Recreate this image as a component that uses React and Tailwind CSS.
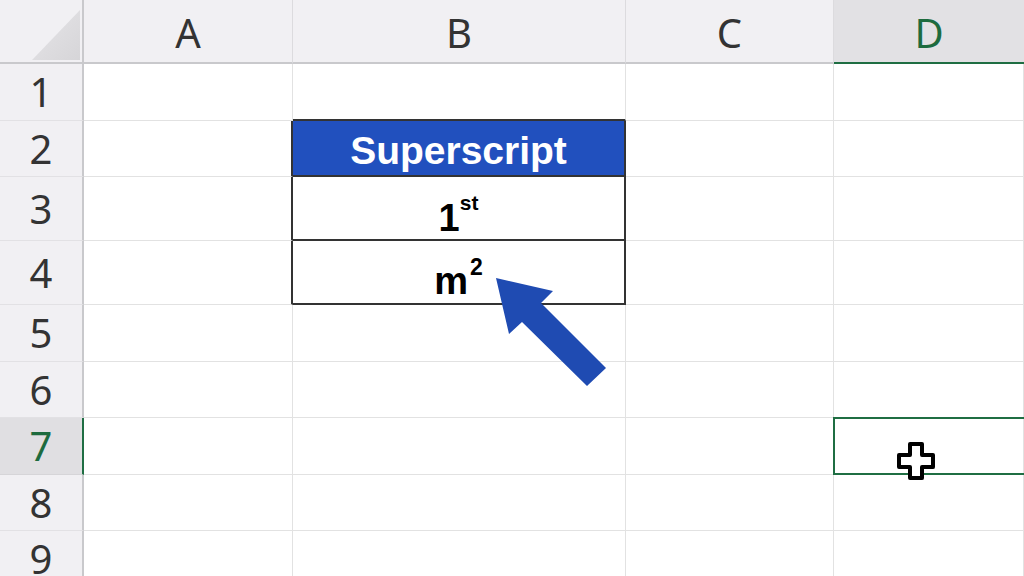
import React from 'react';

const cols = ['A', 'B', 'C', 'D'];
const rows = [1, 2, 3, 4, 5, 6, 7, 8, 9];

const font = { fontFamily: '"Noto Sans", "Open Sans", sans-serif' };

function BodyCell({ col, row }) {
  // base gridlines
  let cls = 'relative border-r border-b border-[#e2e2e2] bg-white';

  // table borders around B2:B4
  if (col === 'A' && row >= 2 && row <= 4) cls = 'relative border-r-2 border-b border-r-[#333] border-b-[#e2e2e2] bg-white';
  if (col === 'B' && row === 1) cls = 'relative border-r border-b-2 border-r-[#e2e2e2] border-b-[#333] bg-white';
  if (col === 'B' && row >= 2 && row <= 4) cls = 'relative border-r-2 border-b-2 border-[#333] bg-white';
  if (col === 'B' && row === 2) cls = 'relative border-r-2 border-b-2 border-[#333] bg-[#2150be]';

  let content = null;
  if (col === 'B' && row === 2) {
    content = <span className="text-[39px] font-bold text-white leading-none pt-1">Superscript</span>;
  }
  if (col === 'B' && row === 3) {
    content = (
      <span className="text-[38px] font-bold text-black leading-none pt-3">
        1<span className="text-[21px] align-[21px]">st</span>
      </span>
    );
  }
  if (col === 'B' && row === 4) {
    content = (
      <span className="text-[38px] font-bold text-black leading-none pt-3">
        m<span className="text-[23px] align-[19px] ml-[2px]">2</span>
      </span>
    );
  }

  return (
    <div className={cls}>
      {content && (
        <div
          className="h-full flex items-center justify-center"
          style={{ fontFamily: '"Liberation Sans", Arial, sans-serif' }}
        >
          {content}
        </div>
      )}
      {col === 'D' && row === 7 && (
        <div className="absolute top-[-1px] left-[-1px] w-[220px] h-[58px] border-2 border-[#1f6e43]"></div>
      )}
    </div>
  );
}

export default function App() {
  return (
    <div className="relative w-[1024px] h-[576px] overflow-hidden bg-white" style={font}>
      <div className="grid grid-cols-[84px_209px_333px_208px_1fr] grid-rows-[64px_57px_56px_64px_64px_57px_56px_57px_56px_56px]">
        {/* corner */}
        <div className="relative bg-[#f1f0f3] border-r-2 border-b-2 border-[#c9c9cc]">
          <svg className="absolute left-0 top-0" width="84" height="64">
            <defs>
              <linearGradient id="tri" x1="0" y1="0" x2="1" y2="1">
                <stop offset="0" stopColor="#e6e5e8" />
                <stop offset="1" stopColor="#d6d5d8" />
              </linearGradient>
            </defs>
            <polygon points="80,10 80,60 32,60" fill="url(#tri)" />
          </svg>
        </div>

        {cols.map((c) =>
          c === 'D' ? (
            <div
              key={c}
              className="flex items-center justify-center pt-1 bg-[#e2e1e4] border-b-2 border-[#1f6e43] text-[40px] text-[#1d6b3e]"
            >
              {c}
            </div>
          ) : (
            <div
              key={c}
              className="flex items-center justify-center pt-1 bg-[#f1f0f3] border-r border-r-[#dcdbde] border-b-2 border-b-[#c9c9cc] text-[40px] text-[#333]"
            >
              {c}
            </div>
          )
        )}

        {rows.map((r) => (
          <React.Fragment key={r}>
            {r === 7 ? (
              <div className="flex items-center justify-center bg-[#e0dfe2] border-r-2 border-r-[#1f6e43] border-b border-b-[#d6d5d8] text-[40px] text-[#1d6b3e]">
                {r}
              </div>
            ) : (
              <div className="flex items-center justify-center bg-[#f1f0f3] border-r-2 border-r-[#c9c9cc] border-b border-b-[#e2e1e4] text-[40px] text-[#333]">
                {r}
              </div>
            )}
            {cols.map((c) => (
              <BodyCell key={c} col={c} row={r} />
            ))}
          </React.Fragment>
        ))}
      </div>

      {/* blue callout arrow */}
      <svg className="absolute left-0 top-0 pointer-events-none" width="1024" height="576">
        <polygon
          points="496,278 553,291 541,303 606,368 587,386 522,322 509,334"
          fill="#1f4bb2"
        />
      </svg>

      {/* cell cursor */}
      <svg className="absolute left-[894px] top-[440px]" width="44" height="44" viewBox="0 0 44 44">
        <path
          d="M16 4h12v11h11v12H28v11H16V27H5V15h11z"
          fill="#000"
          opacity="0.25"
          transform="translate(1.5 2)"
        />
        <path
          d="M16 4h12v11h11v12H28v11H16V27H5V15h11z"
          fill="#fff"
          stroke="#000"
          strokeWidth="4"
          strokeLinejoin="round"
        />
      </svg>
    </div>
  );
}
